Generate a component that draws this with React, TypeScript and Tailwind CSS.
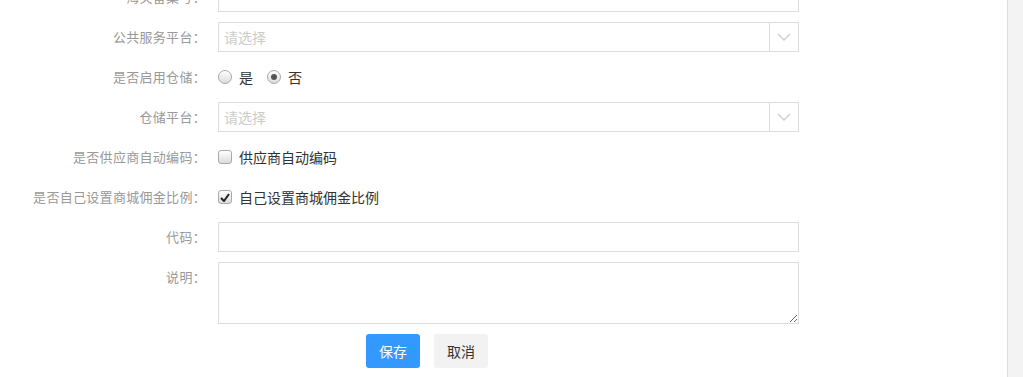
import React, { useState } from 'react';

const font = { fontFamily: '"Microsoft YaHei", "Noto Sans CJK SC", "Liberation Sans", sans-serif' };

const Row = ({ label, children, top = false }: { label: string; children: React.ReactNode; top?: boolean }) => (
  <div className={`flex ${top ? 'items-start' : 'items-center'} min-h-[30px]`}>
    <div className="w-[206px] shrink-0 text-right text-[13px] tracking-[0.3px] text-[#999] leading-[30px] whitespace-nowrap">{label}</div>
    <div className="ml-[12px] flex-1 flex items-center">{children}</div>
  </div>
);

const SelectBox = () => (
  <div className="w-[581px] h-[30px] border border-[#ddd] flex items-stretch bg-white">
    <div className="flex-1 pl-[5px] text-[14px] leading-[28px] text-[#ccc]">请选择</div>
    <div className="w-[29px] border-l border-[#ddd] flex items-center justify-center">
      <svg width="14" height="8" viewBox="0 0 14 8" fill="none">
        <path d="M1 1l6 6 6-6" stroke="#ccc" strokeWidth="1.3" />
      </svg>
    </div>
  </div>
);

const Radio = ({ checked, label, onClick }: { checked: boolean; label: string; onClick: () => void }) => (
  <label className="flex items-center cursor-pointer mr-[14px]" onClick={onClick}>
    <span className="w-[14px] h-[14px] rounded-full border border-[#a9a9a9] bg-gradient-to-b from-white to-[#dcdcdc] flex items-center justify-center">
      {checked && <span className="w-[6px] h-[6px] rounded-full bg-[#555]" />}
    </span>
    <span className="ml-[7px] text-[14px] text-[#333]">{label}</span>
  </label>
);

const Check = ({ checked, label, onClick }: { checked: boolean; label: string; onClick: () => void }) => (
  <label className="flex items-center cursor-pointer" onClick={onClick}>
    <span className="w-[14px] h-[14px] rounded-[3px] border border-[#a9a9a9] bg-gradient-to-b from-white to-[#dcdcdc] flex items-center justify-center">
      {checked && (
        <svg width="10" height="9" viewBox="0 0 10 9">
          <path d="M1 5l3 3 5-7" stroke="#222" strokeWidth="2" fill="none" />
        </svg>
      )}
    </span>
    <span className="ml-[7px] text-[14px] text-[#333]">{label}</span>
  </label>
);

export default function App() {
  const [useStore, setUseStore] = useState(false);
  const [autoCode, setAutoCode] = useState(false);
  const [ownRate, setOwnRate] = useState(true);

  return (
    <div className="flex w-[1023px] h-[377px] overflow-hidden bg-white" style={font}>
      <div className="flex-1 flex flex-col gap-[10px] -mt-[18px]">
        <Row label="海关备案号：">
          <input className="w-[581px] h-[30px] border border-[#ddd] outline-none px-[6px] text-[14px]" />
        </Row>
        <Row label="公共服务平台：">
          <SelectBox />
        </Row>
        <Row label="是否启用仓储：">
          <Radio checked={useStore} label="是" onClick={() => setUseStore(true)} />
          <Radio checked={!useStore} label="否" onClick={() => setUseStore(false)} />
        </Row>
        <Row label="仓储平台：">
          <SelectBox />
        </Row>
        <Row label="是否供应商自动编码：">
          <Check checked={autoCode} label="供应商自动编码" onClick={() => setAutoCode(!autoCode)} />
        </Row>
        <Row label="是否自己设置商城佣金比例：">
          <Check checked={ownRate} label="自己设置商城佣金比例" onClick={() => setOwnRate(!ownRate)} />
        </Row>
        <Row label="代码：">
          <input className="w-[581px] h-[30px] border border-[#ddd] outline-none px-[6px] text-[14px]" />
        </Row>
        <Row label="说明：" top>
          <textarea className="w-[581px] h-[62px] border border-[#ddd] outline-none px-[6px] text-[14px] block" />
        </Row>
        <div className="flex pl-[366px] gap-[14px]">
          <button className="w-[54px] h-[34px] rounded-[3px] bg-[#3399ff] text-white text-[14px]">保存</button>
          <button className="w-[54px] h-[34px] rounded-[3px] bg-[#f2f2f2] text-[#333] text-[14px]">取消</button>
        </div>
      </div>
      <div className="w-[16px] shrink-0 border-l border-[#ddd] bg-[#f3f3f3]" />
    </div>
  );
}
